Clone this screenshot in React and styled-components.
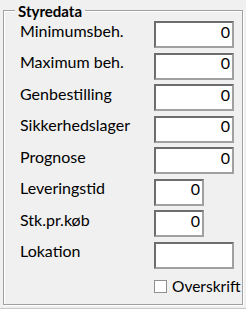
import React from "react";
import styled, { createGlobalStyle } from "styled-components";

const Global = createGlobalStyle`
  html, body { margin: 0; padding: 0; background: #f0f0f0; }
  body { font-family: Lato, "Liberation Sans", sans-serif; color: #000; }
`;

const Page = styled.div`
  width: 246px;
  height: 309px;
  overflow: hidden;
  display: flex;
  flex-direction: column;
`;

const Group = styled.section`
  position: relative;
  box-sizing: border-box;
  margin: 10px 0 0 3px;
  width: 240px;
  height: 295px;
  border: 1px solid #a0a0a0;
  box-shadow: inset 1px 1px 0 #fff, 1px 1px 0 #fff;
  padding: 10px 0 0 16px;
`;

const Legend = styled.h2`
  position: absolute;
  top: -9px;
  left: 11px;
  margin: 0;
  padding: 0 3px;
  background: #f0f0f0;
  font: 700 15px/18px Lato, "Liberation Sans", sans-serif;
`;

const Form = styled.div`
  display: grid;
  grid-template-columns: 134px auto;
  grid-auto-rows: 27px;
  row-gap: 4.5px;
  align-items: start;
`;

const Label = styled.label`
  font-size: 16px;
  line-height: 18px;
  padding-top: 0.5px;
  white-space: nowrap;
`;

const Field = styled.input`
  box-sizing: border-box;
  width: ${(p) => (p.$short ? 50 : 80)}px;
  height: 27px;
  margin: 0;
  padding: 0 2px 7px;
  border: 2px solid;
  border-color: #6d6d6d #a0a0a0 #a0a0a0 #6d6d6d;
  background: #fff;
  text-align: right;
  font: 16px/18px Lato, "Liberation Sans", sans-serif;
  color: #000;
  outline: none;
`;

const CheckRow = styled.label`
  grid-column: 2;
  display: flex;
  align-items: center;
  gap: 5px;
  margin-top: 4px;
  font-size: 15.5px;
  line-height: 18px;
  white-space: nowrap;
`;

const Check = styled.input`
  appearance: none;
  box-sizing: border-box;
  width: 13px;
  height: 13px;
  margin: 0;
  border: 1px solid #8f8f8f;
  background: #fff;
`;

const Divider = styled.div`
  margin-top: 3px;
  height: 1px;
  background: #c8c8c8;
`;

const rows = [
  { label: "Minimumsbeh.", value: "0" },
  { label: "Maximum beh.", value: "0" },
  { label: "Genbestilling", value: "0" },
  { label: "Sikkerhedslager", value: "0" },
  { label: "Prognose", value: "0" },
  { label: "Leveringstid", value: "0", short: true },
  { label: "Stk.pr.køb", value: "0", short: true },
  { label: "Lokation", value: "" },
];

export default function App() {
  return (
    <Page>
      <Global />
      <Group>
        <Legend>Styredata</Legend>
        <Form>
          {rows.map((r) => (
            <React.Fragment key={r.label}>
              <Label>{r.label}</Label>
              <Field readOnly value={r.value} $short={r.short} />
            </React.Fragment>
          ))}
          <CheckRow>
            <Check type="checkbox" readOnly />
            Overskrift
          </CheckRow>
        </Form>
      </Group>
      <Divider />
    </Page>
  );
}
